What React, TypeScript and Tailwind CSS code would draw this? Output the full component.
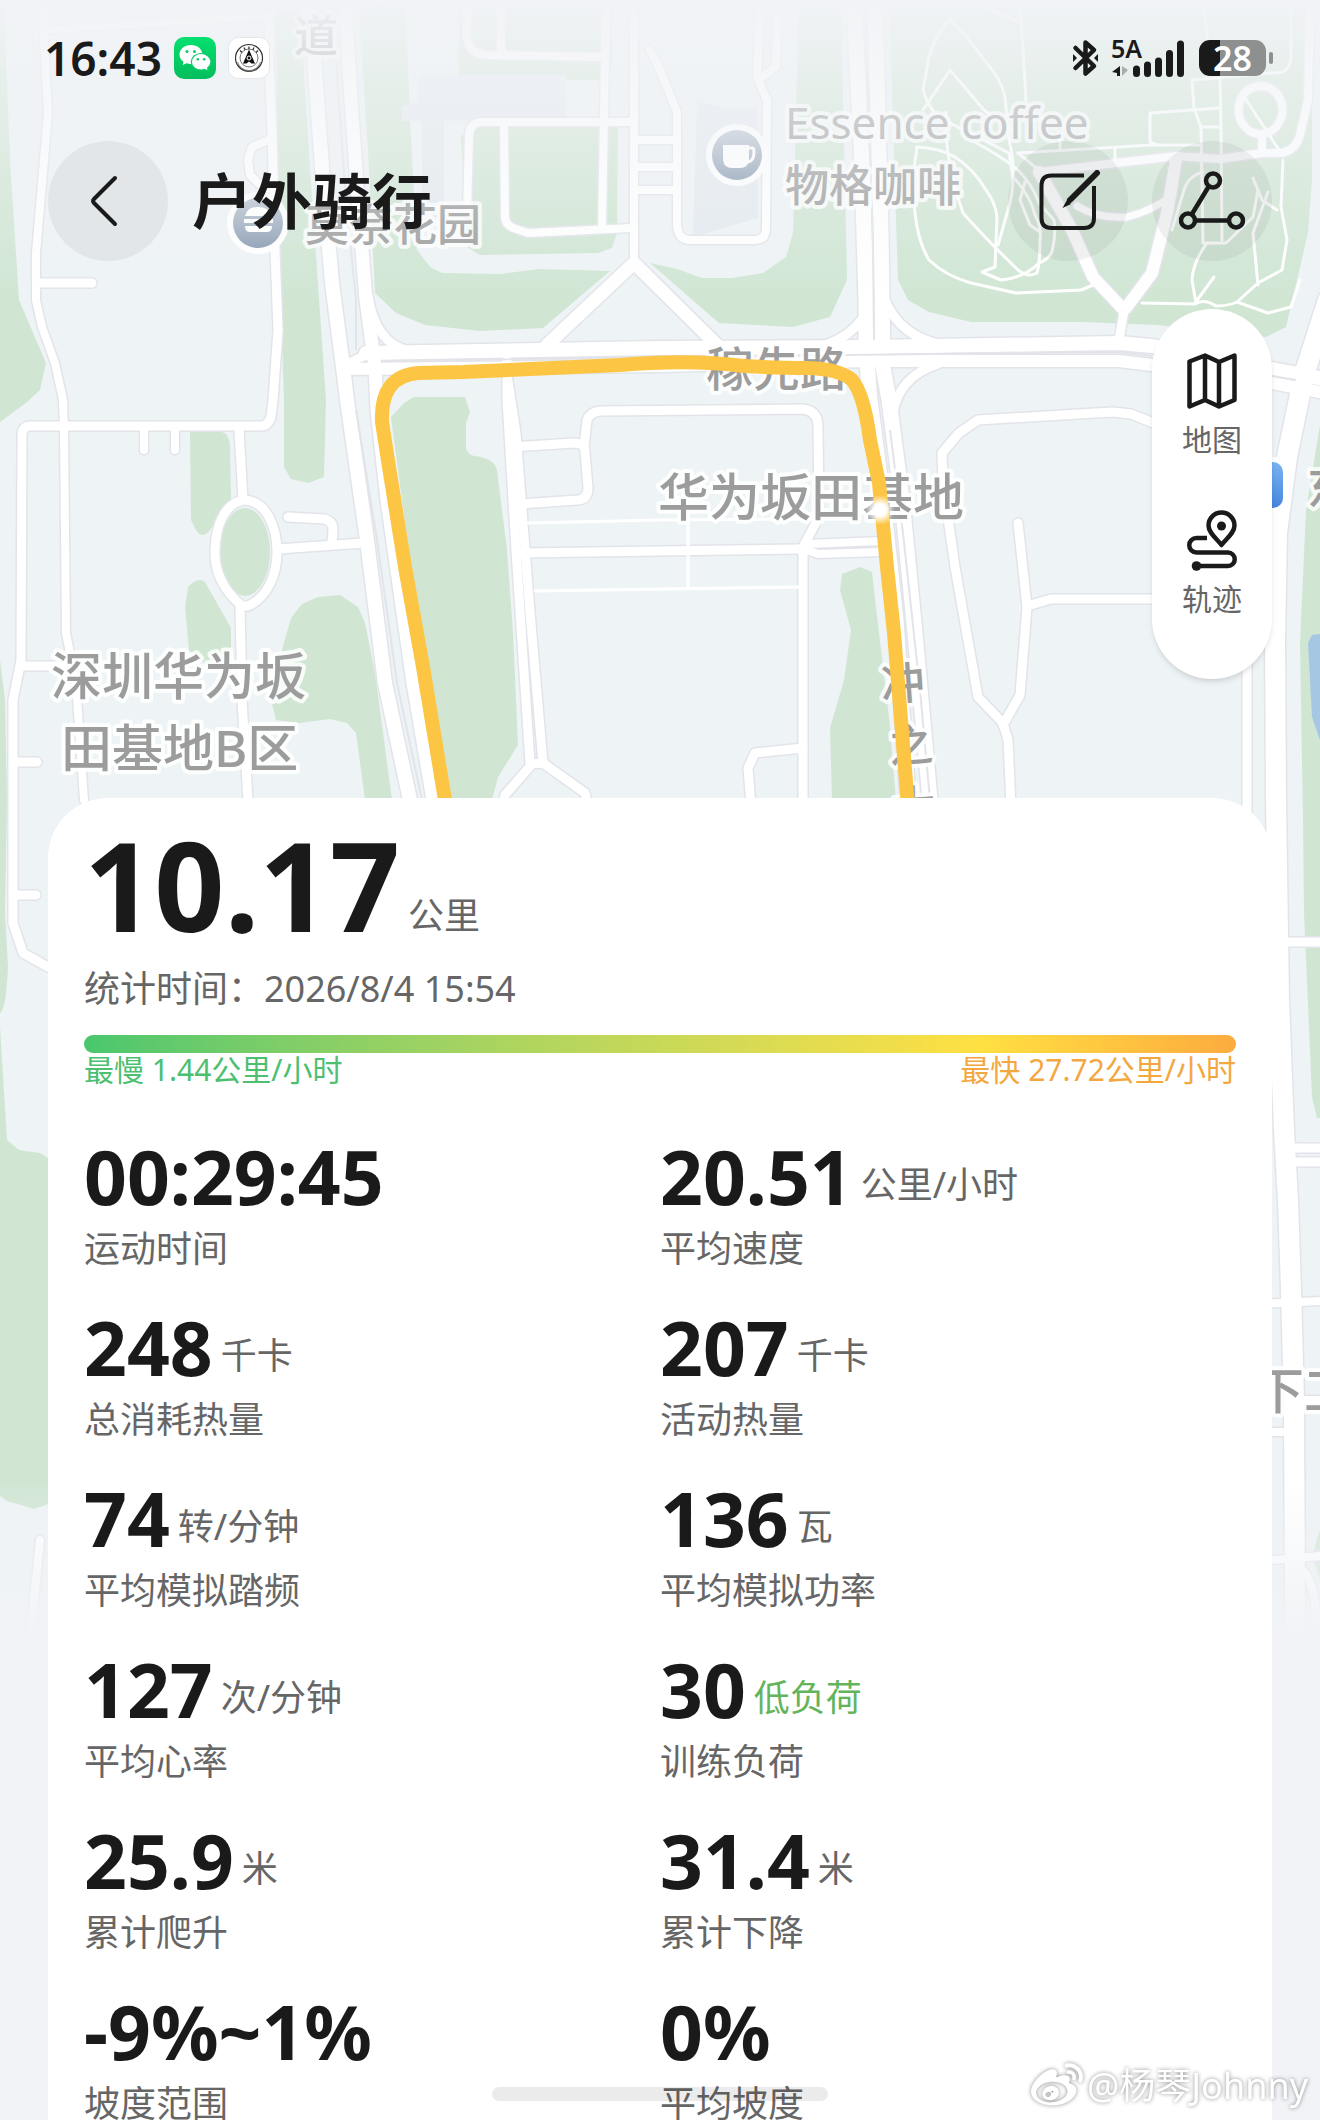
import React from "react";
import { FaWeibo } from "react-icons/fa";

type Road = { d: string; w: number };

const roads: Road[] = [
  // west blocks
  { w: 8, d: "M42 0L48 113L36 253L36 300L42 327L55 363L63 400L64 430L66 633L76 683L84 800" },
  { w: 9, d: "M38 283H92" },
  { w: 7, d: "M45 30L270 16" },
  { w: 9, d: "M270 20L269 60L272 130L275 250L278 330L273 400L271 417Q268 426 261 426H30Q22 426 22 436L21 660L13 700V923L23 953L48 967" },
  { w: 8, d: "M268 140L252 147L248 160L250 175L268 192" },
  { w: 8, d: "M144 430V450M175 430V450" },
  { w: 9, d: "M239 430L243 500" },
  { w: 9, d: "M243 500C268 500 277 530 277 552S268 597 248 606H242C230 596 214 578 215 550S226 504 243 500" },
  { w: 9, d: "M240 607L242 700L248 800" },
  { w: 9, d: "M278 549L364 543" },
  { w: 9, d: "M288 517L324 519Q333 521 333 530L332 543" },
  { w: 9, d: "M22 666H66M13 762H37M13 895H36" },
  { w: 8, d: "M40 1540L30 1640" },
  // western avenue
  { w: 14, d: "M306 0L314 57L322 167L332 283L343 367L347 400L366 533L385 683L410 800" },
  { w: 13, d: "M345 0L351 100L358 200L366 300L375 367L377 410L387 500L413 683L433 800" },
  { w: 9, d: "M368 296Q376 345 410 351" },
  { w: 9, d: "M343 366L372 352" },
  // cross street
  { w: 14, d: "M366 353L660 348L870 347L1119 343L1152 346L1272 369L1320 378" },
  { w: 12, d: "M345 369L660 366L870 361L1119 361L1152 365L1272 383L1320 392" },
  { w: 13, d: "M547 345L634 263L719 347" },
  // northern grid
  { w: 8, d: "M634 0V263" },
  { w: 8, d: "M467 0V38Q470 55 488 55L602 57" },
  { w: 8, d: "M501 0V55" },
  { w: 8, d: "M606 0L602 228" },
  { w: 8, d: "M633 122H480Q469 124 469 136L467 213" },
  { w: 8, d: "M504 125L505 218Q506 226 516 229L528 233L631 228" },
  { w: 8, d: "M634 140H677M634 167H677M634 190H677" },
  { w: 8, d: "M650 50Q657 62 662 75L677 112V225Q678 240 690 240H755Q766 240 766 228L767 100L757 77L760 10" },
  { w: 8, d: "M778 0L776 66L759 80" },
  // central avenue
  { w: 15, d: "M854 0L862 167L866 300L866 350L870 400L883 500L896 620L908 800" },
  { w: 15, d: "M875 0L881 233L883 367L889 400L902 500L915 633L930 800" },
  { w: 9, d: "M863 318Q850 336 828 344" },
  { w: 9, d: "M884 298Q900 338 944 345" },
  { w: 9, d: "M938 364Q900 376 893 412" },
  // park roads
  { w: 9, d: "M1125 305L1119 340" },
  { w: 12, d: "M1122 308L1093 277L1072 230L1039 172" },
  { w: 12, d: "M1126 308L1152 273L1167 213L1176 160" },
  { w: 7, d: "M1077 206Q1098 219 1127 217Q1150 212 1173 195" },
  { w: 8, d: "M1039 172L1176 156L1220 159L1262 153H1282Q1296 150 1300 135L1308 100L1310 0" },
  { w: 8, d: "M1261 86A22 24 0 1 1 1260 86ZM1262 134V153" },
  // inner block
  { w: 9, d: "M507 360V400L516 550L530 763" },
  { w: 9, d: "M507 375L516 433L529 600L543 763" },
  { w: 9, d: "M530 764L543 763L585 793L588 806M532 764L505 795L502 806" },
  { w: 9, d: "M511 447L574 443Q585 443 585 452L588 488Q588 499 578 500L520 504" },
  { w: 9, d: "M584 447L587 420Q590 412 600 411L803 409Q818 411 818 426L819 517L803 547V806" },
  { w: 9, d: "M520 553L803 549" },
  { w: 8, d: "M807 544L881 541M807 550L818 554L881 552" },
  { w: 9, d: "M803 748L755 753L748 768L751 806" },
  // eastern blocks
  { w: 9, d: "M1156 424L1131 414L1112 412L978 420L959 433L942 453L943 483L955 567L978 697L1003 723L1008 740L1011 806" },
  { w: 9, d: "M1018 523L1027 607L1020 695L1003 725" },
  { w: 9, d: "M1027 606L1051 599H1160" },
  { w: 9, d: "M1247 660V830" },
  { w: 20, d: "M1328 300L1304 375L1287 457L1277 533L1275 640L1276 798L1279 1000L1284 1130L1288 1200L1291 1290L1294 1400L1295 1624" },
  { w: 9, d: "M1284 942H1320M1284 1148H1320M1284 1162H1320" },
  { w: 8, d: "M1262 1304L1320 1301M1262 1432H1292M1296 1400H1320M1262 1561L1320 1556" },
  { w: 8, d: "M1300 1568Q1316 1580 1316 1622" },
];

const paths: string[] = [
  "M528 523L660 520L819 519",
  "M535 591L800 587",
  "M688 520V588",
  "M1018 153L1152 145L1200 145",
  "M1157 145L1150 142V113L1220 108",
  "M1192 80L1194 108L1201 127L1203 243H1226L1253 217L1258 190",
  "M1220 77L1221 127L1222 240M1201 127H1220",
  "M1192 80L1283 72Q1291 68 1291 55V0",
  "M1206 78L1207 34L1204 10",
  "M1245 98L1281 153",
  "M950 18Q934 38 929 57L923 90Q928 108 940 118L1009 153L1013 177Q1030 195 1035 215Q1042 228 1040 240Q1040 262 1037 273Q1028 278 1018 270Q985 238 963 213Q948 172 946 133V112",
  "M917 147Q911 180 915 213Q918 242 929 260Q946 276 971 283L1016 293L1081 290L1093 285",
  "M917 147Q940 148 955 157Q974 170 984 187Q996 203 997 217L995 267L982 272L1001 280Q1024 278 1039 263Q1052 258 1053 247Q1056 232 1054 220L1039 203Q1032 184 1018 170Q998 154 976 143",
  "M950 20Q968 36 984 60Q1001 78 1005 97L1009 140Q1014 160 1013 175Q1013 195 1008 210L998 245",
  "M923 110L950 70L984 110L1012 130",
  "M1020 0L1026 100M990 10L1020 22",
  "M1018 153L1045 175M1060 150V140M1115 148V160",
  "M1203 172Q1188 176 1184 190L1172 230",
  "M1207 243Q1193 262 1192 280L1196 303",
  "M1142 303L1195 304Q1204 298 1216 306Q1228 306 1237 302L1258 283L1282 270L1287 240L1281 207L1283 160",
  "M1237 302L1268 313L1291 307L1300 280",
  "M1253 178L1262 200L1277 210",
  "M1268 192L1253 233L1258 285",
  "M1195 303L1214 277",
  "M1025 182L1020 200L1030 225L1040 232",
];

const greens: string[] = [
  "M0 0H4L10 160L19 300L46 363L40 390L27 402L0 422Z",
  "M276 10H300L311 183L326 400L324 477L308 483L291 479L284 467V400L279 250Z",
  "M358 0L406 10L410 120L417 250L430 267L442 273L501 274L539 269L610 271L543 328L480 331L425 325L396 313L375 293L368 150Z",
  "M459 0H612V66L598 80H566L459 75Z",
  "M461 136L478 125H618L617 233L612 248L598 253L480 255L467 247Z",
  "M799 0H841L847 280L830 317L793 327L719 323L650 263L677 269L702 278H732L763 273L786 257L793 233Z",
  "M889 0H1312V180L1308 233L1286 327L1266 337L1157 325L1081 322H971L929 312L908 300L898 280Z",
  "M190 432H222Q229 434 230 445L231 500L210 530Q202 540 196 530L191 520Z",
  "M220 552A25 44 0 1 0 270 552A25 44 0 1 0 220 552Z",
  "M185 607L188 587Q198 576 205 582L231 628V650L206 665L189 650Z",
  "M318 597L340 595L358 607L365 623L375 673L392 800H365L356 733L347 723L330 719L299 723L276 720L271 700L282 650L291 618L302 604Z",
  "M391 417L404 403L414 397H465L470 412L466 423V448Q468 455 475 456Q494 458 497 470L507 550L513 633L518 745L498 777L492 800H447L424 667Z",
  "M842 574L860 567L872 572L879 633L889 717L896 800H832L830 728L844 680L851 630L840 590Z",
  "M1320 425L1306 510L1300 643L1303 820L1304 913L1312 1097L1317 1118H1320Z",
  "M0 660L5 700L7 800L5 913L8 967Q6 1010 0 1013Z",
  "M0 1027L7 1140L19 1150L40 1153L60 1165V1500L34 1509L7 1501L0 1496Z",
  "M1320 1530L1312 1555L1320 1580Z",
];

const routeLine =
  "M446 806L423 667L405 567L389 467L382 422Q380 376 418 373L463 372L620 365Q690 359 744 366Q780 368 807 368Q840 369 852 380Q864 394 870 440L879 483L887 567L894 633L908 806";

function MapLabel(props: {
  x: number;
  y: number;
  size: number;
  color?: string;
  weight?: number;
  rotate?: number;
  children: string;
}) {
  const { x, y, size, color = "#9c9c9c", weight = 500, rotate, children } = props;
  return (
    <text
      x={x}
      y={y}
      fontSize={size}
      fill={color}
      stroke="#ffffff"
      strokeOpacity={0.85}
      strokeWidth={8}
      strokeLinejoin="round"
      paintOrder="stroke"
      fontWeight={weight}
      transform={rotate ? `rotate(${rotate} ${x} ${y})` : undefined}
    >
      {children}
    </text>
  );
}

function MapBackground() {
  return (
    <svg aria-hidden="true" viewBox="0 0 1320 1640" className="absolute inset-x-0 top-0 h-auto w-full">
      <defs>
        <linearGradient id="topFade" x1="0" y1="0" x2="0" y2="1">
          <stop offset="0" stopColor="#f1f3f6" stopOpacity="1" />
          <stop offset="0.25" stopColor="#f1f3f6" stopOpacity="0.7" />
          <stop offset="0.65" stopColor="#f1f3f6" stopOpacity="0.3" />
          <stop offset="1" stopColor="#f1f3f6" stopOpacity="0" />
        </linearGradient>
        <linearGradient id="bottomFade" x1="0" y1="0" x2="0" y2="1">
          <stop offset="0" stopColor="#f1f3f6" stopOpacity="0" />
          <stop offset="0.85" stopColor="#f1f3f6" stopOpacity="0.9" />
          <stop offset="1" stopColor="#f1f3f6" stopOpacity="1" />
        </linearGradient>
        <linearGradient id="poi" x1="0" y1="0" x2="0" y2="1">
          <stop offset="0" stopColor="#b9c3d0" />
          <stop offset="1" stopColor="#8799b0" />
        </linearGradient>
        <linearGradient id="metro" x1="0" y1="0" x2="0" y2="1">
          <stop offset="0" stopColor="#79b4f2" />
          <stop offset="1" stopColor="#4486dd" />
        </linearGradient>
        <radialGradient id="glow">
          <stop offset="0.4" stopColor="#ffffff" />
          <stop offset="1" stopColor="#ffffff" stopOpacity="0" />
        </radialGradient>
      </defs>
      <rect width="1320" height="1640" fill="#eef3f6" />
      {greens.map((d) => (
        <path key={d} d={d} fill="#d0e6d3" />
      ))}
      <path d="M418 75H566V118L444 121V220H422V121H402V106L418 102Z" fill="#e4eaf0" />
      <path d="M697 100L726 109L758 107V218L693 237Z" fill="#e4eaf0" />
      <path d="M1320 634L1312 635L1308 643L1312 717L1320 740Z" fill="#a5c7e4" />
      <g fill="none" stroke="#e2e4ea" strokeLinecap="round" strokeLinejoin="round">
        {roads.map((r) => (
          <path key={r.d} d={r.d} strokeWidth={r.w + 3} />
        ))}
      </g>
      <g fill="none" stroke="#ffffff" strokeLinecap="round" strokeLinejoin="round">
        {roads.map((r) => (
          <path key={r.d} d={r.d} strokeWidth={r.w} />
        ))}
        {paths.map((d) => (
          <path key={d} d={d} strokeWidth={3} />
        ))}
      </g>
      <g stroke="#e2e4ea" strokeWidth="2" fill="none">
        <path d="M336 60L346 200L356 300L356 350M356 410L376 533L397 683L422 800" />
        <path d="M866 20L873 240L874 340M890 430L903 533L920 690L930 800" />
        <path d="M390 361L660 357L1119 352L1152 356M1272 376L1296 380" />
      </g>

      <g fontFamily='"Noto Sans", "Noto Sans CJK SC", sans-serif'>
        <MapLabel x={294} y={52} size={44} color="#8c8c8c">道</MapLabel>
        <MapLabel x={305} y={241} size={44}>莫奈花园</MapLabel>
        <MapLabel x={785} y={139} size={44} color="#9d9d9d" weight={400}>Essence coffee</MapLabel>
        <MapLabel x={785} y={202} size={44}>物格咖啡</MapLabel>
        <MapLabel x={706} y={386} size={47}>稼先路</MapLabel>
        <MapLabel x={658} y={516} size={51}>华为坂田基地</MapLabel>
        <MapLabel x={51} y={695} size={51}>深圳华为坂</MapLabel>
        <MapLabel x={61} y={767} size={51}>田基地B区</MapLabel>
        <MapLabel x={882} y={701} size={44} rotate={-4}>冲</MapLabel>
        <MapLabel x={890} y={763} size={44} rotate={-4}>之</MapLabel>
        <MapLabel x={893} y={824} size={44} rotate={-4}>大</MapLabel>
        <MapLabel x={1307} y={504} size={46}>东</MapLabel>
        <MapLabel x={1254} y={1409} size={50}>下工</MapLabel>
      </g>

      <circle cx="258" cy="223" r="31" fill="#ffffff" />
      <circle cx="258" cy="223" r="25" fill="url(#poi)" />
      <path d="M245 216Q247 207 258 207T272 216ZM244 219H273V223H244ZM245 226H272Q272 232 267 232H250Q245 232 245 226Z" fill="#ffffff" />
      <circle cx="737" cy="155" r="31" fill="#ffffff" />
      <circle cx="737" cy="155" r="25" fill="url(#poi)" />
      <path d="M723 145H749V160Q748 168 740 168H732Q724 168 723 160Z" fill="#ffffff" />
      <path d="M749 148H752Q754 148 754 152Q754 161 748 162" fill="none" stroke="#ffffff" strokeWidth="3" />
      <rect x="1234" y="457" width="55" height="56" rx="14" fill="#ffffff" />
      <rect x="1240" y="462" width="43" height="46" rx="10" fill="url(#metro)" />

      <rect width="1320" height="300" fill="url(#topFade)" />
      <rect y="1480" width="1320" height="160" fill="url(#bottomFade)" />
      <path d={routeLine} fill="none" stroke="#fdc544" strokeWidth="14" strokeLinejoin="round" />
      <circle cx="880" cy="510" r="15" fill="url(#glow)" />
    </svg>
  );
}

function WeChatIcon() {
  return (
    <svg viewBox="0 0 42 42" className="size-[42px]" role="img" aria-label="微信">
      <defs>
        <linearGradient id="wx" x1="0" y1="0" x2="0" y2="1">
          <stop offset="0" stopColor="#06e070" />
          <stop offset="1" stopColor="#05bd5c" />
        </linearGradient>
      </defs>
      <rect width="42" height="42" rx="10" fill="url(#wx)" />
      <path d="M17 8C10.500 8 5.500 12.200 5.500 17.500C5.500 20.500 7 23 9.500 24.700L8.700 28L12.500 26.200Q14.500 26.900 17 26.900C23.500 26.900 28.300 22.800 28.300 17.500S23.500 8 17 8Z" fill="#fff" />
      <path d="M27 16.500C21.600 16.500 17.300 20.200 17.300 24.800S21.600 33 27 33Q29 33 30.800 32.400L34.400 34.200L33.600 31C35.700 29.500 37 27.300 37 24.800C37 20.200 32.400 16.500 27 16.500Z" fill="#fff" stroke="#06cd65" strokeWidth="1.200" />
      <g fill="#06cd65">
        <circle cx="13" cy="14.500" r="1.500" />
        <circle cx="20.500" cy="14.500" r="1.500" />
        <circle cx="23.800" cy="22.300" r="1.300" />
        <circle cx="30.200" cy="22.300" r="1.300" />
      </g>
    </svg>
  );
}

function BadgeAppIcon() {
  return (
    <svg viewBox="0 0 42 42" className="size-[42px]" aria-hidden="true">
      <rect x="0.500" y="0.500" width="41" height="41" rx="10" fill="#fff" stroke="#e4e6e9" />
      <circle cx="21" cy="21" r="13.500" fill="none" stroke="#333" strokeWidth="1.200" />
      <circle cx="21" cy="21" r="9" fill="none" stroke="#555" strokeWidth="0.800" />
      <path d="M9.500 25A12 12 0 0 0 32.500 25M10.500 28A12 12 0 0 0 31.500 28" fill="none" stroke="#666" strokeWidth="0.800" />
      <path d="M12 13.500L14 15.500M16 10.500L17.200 13M21 9.500V12.200M26 10.500L24.800 13M30 13.500L28 15.500" stroke="#333" strokeWidth="1.300" />
      <path d="M21 12.500L15 26.500H18.500L21 24.500L23.500 26.500H27Z" fill="#111" />
      <circle cx="21" cy="21" r="2" fill="none" stroke="#fff" />
    </svg>
  );
}

function StatusIcons() {
  return (
    <div className="flex items-center">
      <svg viewBox="0 0 27 38" className="mr-3 h-[38px] w-[27px]" role="img" aria-label="蓝牙">
        <path d="M3.500 9L22 27L13.500 34.500V3.500L22 11L3.500 29" fill="none" stroke="#1a1a1a" strokeWidth="4.500" strokeLinejoin="round" strokeLinecap="round" />
        <path d="M1 15L5 19L1 23ZM26 15L22 19L26 23Z" fill="#1a1a1a" />
      </svg>
      <div className="relative h-[38px] w-[76px]">
        <span className="absolute left-0 top-0 text-[25px] font-semibold leading-[18px]">5A</span>
        <svg viewBox="0 0 76 38" className="h-[38px] w-[76px]" role="img" aria-label="信号">
          <path d="M9 27V37H6V34L1 33Z" fill="#1a1a1a" />
          <path d="M11 27V37L17 31Z" fill="#a8adab" />
          <path d="M25.500 30V34.500M36.500 26V34.500M47.500 22V34.500M58.500 14.500V34.500M69.500 5V34.500" stroke="#1a1a1a" strokeWidth="7" strokeLinecap="round" />
        </svg>
      </div>
      <div className="ml-3 flex h-9 w-[67px] items-center justify-center rounded-[11px] bg-linear-to-r from-[#1a1a1a] from-32% to-[#8d908f] to-32% text-[34px] font-semibold leading-9 text-white">
        28
      </div>
      <span className="ml-[3px] h-3 w-1 rounded-full bg-[#8d908f]" />
    </div>
  );
}

function BackIcon() {
  return (
    <svg viewBox="0 0 36 52" className="mr-2 h-[52px] w-9" aria-hidden="true">
      <path d="M29 3L8 24Q6 26 8 28L29 49" fill="none" stroke="#1a1a1a" strokeWidth="4" strokeLinecap="round" strokeLinejoin="round" />
    </svg>
  );
}

function EditIcon() {
  return (
    <svg viewBox="0 0 62 62" className="ml-1 size-[62px]" aria-hidden="true">
      <path d="M45 5.500H12.500Q2.500 5.500 2.500 15.500V48Q2.500 58 12.500 58H45Q55 58 55 48V16" fill="none" stroke="#1a1a1a" strokeWidth="4" />
      <path d="M58 3L31 30" stroke="#1a1a1a" strokeWidth="6" strokeLinecap="round" />
      <path d="M28 30L32 34L23.500 38Z" fill="#1a1a1a" />
    </svg>
  );
}

function NodesIcon() {
  return (
    <svg viewBox="0 0 66 60" className="h-[60px] w-[66px]" aria-hidden="true">
      <g fill="none" stroke="#1a1a1a" strokeWidth="4.500">
        <circle cx="34" cy="9.500" r="7" />
        <circle cx="9" cy="49.500" r="7" />
        <circle cx="57" cy="49.500" r="7" />
        <path d="M30 15L13 43M16 49.500H50" />
      </g>
    </svg>
  );
}

function MapIcon() {
  return (
    <svg viewBox="0 0 50 56" className="h-14 w-[50px]" aria-hidden="true">
      <path d="M2.500 8.500L18 2.500L32 9L47.500 2.500V47L32 53.500L18 47L2.500 53.500ZM18 2.500V47M32 9V53.500" fill="none" stroke="#1a1a1a" strokeWidth="4.500" strokeLinejoin="round" />
    </svg>
  );
}

function TrackIcon() {
  return (
    <svg viewBox="0 0 50 62" className="h-[62px] w-[50px]" aria-hidden="true">
      <g fill="none" stroke="#1a1a1a" strokeWidth="4.500" strokeLinejoin="round">
        <path d="M34.500 35C30 29 21.500 23 21.500 15.500A13 13 0 0 1 47.500 15.500C47.500 23 39 29 34.500 35Z" />
        <path d="M20 28H9.500A7 7 0 0 0 9.500 42.500H41A6.500 6.500 0 0 1 41 56H9" />
      </g>
      <circle cx="34.500" cy="16" r="4.500" fill="#1a1a1a" />
      <circle cx="9.500" cy="56" r="4.800" fill="#1a1a1a" />
    </svg>
  );
}

type Stat = { value: string; unit?: string; label: string; green?: boolean };

const stats: Stat[] = [
  { value: "00:29:45", label: "运动时间" },
  { value: "20.51", unit: "公里/小时", label: "平均速度" },
  { value: "248", unit: "千卡", label: "总消耗热量" },
  { value: "207", unit: "千卡", label: "活动热量" },
  { value: "74", unit: "转/分钟", label: "平均模拟踏频" },
  { value: "136", unit: "瓦", label: "平均模拟功率" },
  { value: "127", unit: "次/分钟", label: "平均心率" },
  { value: "30", unit: "低负荷", label: "训练负荷", green: true },
  { value: "25.9", unit: "米", label: "累计爬升" },
  { value: "31.4", unit: "米", label: "累计下降" },
  { value: "-9%~1%", label: "坡度范围" },
  { value: "0%", label: "平均坡度" },
];

function StatItem({ stat }: { stat: Stat }) {
  return (
    <div className="flex flex-col-reverse gap-1.5">
      <dt className="text-[36px] leading-[47px] text-[#666666]">{stat.label}</dt>
      <dd className="flex items-end gap-2">
        <span className="text-[75px] font-bold leading-[86px]">{stat.value}</span>
        {stat.unit && (
          <span className={stat.green ? "text-[36px] leading-[68px] text-[#64b45c]" : "text-[36px] leading-[68px] text-[#666666]"}>
            {stat.unit}
          </span>
        )}
      </dd>
    </div>
  );
}

export default function App() {
  return (
    <div className="relative h-screen overflow-hidden bg-[#f1f3f6] font-['Noto_Sans','Noto_Sans_CJK_SC',sans-serif] text-[#1a1a1a]">
      <MapBackground />

      <div className="relative flex flex-col">
        <div className="flex h-[116px] items-center justify-between pl-11 pr-[47px]">
          <div className="flex items-center gap-3">
            <span className="text-[46px] font-semibold leading-[48px]">16:43</span>
            <WeChatIcon />
            <BadgeAppIcon />
          </div>
          <StatusIcons />
        </div>

        <header className="mt-[25px] flex items-center gap-6 px-12">
          <button type="button" aria-label="返回" className="flex size-[120px] shrink-0 items-center justify-center rounded-full bg-black/5">
            <BackIcon />
          </button>
          <h1 className="grow text-[60px] font-bold leading-[80px]">户外骑行</h1>
          <button type="button" aria-label="编辑" className="flex size-[120px] shrink-0 items-center justify-center rounded-full bg-black/5">
            <EditIcon />
          </button>
          <button type="button" aria-label="分享轨迹" className="flex size-[120px] shrink-0 items-center justify-center rounded-full bg-black/5">
            <NodesIcon />
          </button>
        </header>

        <nav className="mr-12 mt-12 flex h-[370px] w-[120px] flex-col items-center gap-[50px] self-end rounded-full bg-white pt-11 text-[#666666] shadow-md">
          <button type="button" className="flex flex-col items-center gap-[11px] text-[30px] leading-[40px]">
            <MapIcon />
            地图
          </button>
          <button type="button" className="flex flex-col items-center gap-[7px] text-[30px] leading-[40px]">
            <TrackIcon />
            轨迹
          </button>
        </nav>

        <main className="mx-12 mt-[119px] rounded-t-[60px] bg-white px-9 pt-[27px]">
          <div className="flex items-end gap-2">
            <span className="text-[123px] font-bold leading-[120px]">10.17</span>
            <span className="text-[36px] leading-[58px] text-[#666666]">公里</span>
          </div>
          <p className="mt-5 text-[36px] leading-[48px] text-[#666666]">统计时间：2026/8/4 15:54</p>
          <div className="mt-[22px] h-[18px] rounded-[9px] bg-linear-to-r from-[#48c76e] via-[#ffe042] via-78% to-[#fcab3e]" />
          <div className="flex justify-between text-[30px] leading-[34px]">
            <span className="text-[#4dbf70]">最慢 1.44公里/小时</span>
            <span className="text-[#f3a83f]">最快 27.72公里/小时</span>
          </div>
          <dl className="mt-[46px] grid grid-cols-2 gap-y-8">
            {stats.map((s) => (
              <StatItem key={s.label} stat={s} />
            ))}
          </dl>
        </main>
      </div>

      <div className="absolute bottom-[19px] left-1/2 h-[14px] w-[336px] -translate-x-1/2 rounded-full bg-black/8" />
      <div className="absolute bottom-2 right-3 flex items-center gap-1 text-[36px] leading-[48px] text-white drop-shadow-[0_0_2px_rgba(0,0,0,0.45)]">
        <FaWeibo className="size-[52px]" aria-hidden="true" />
        <span>@杨琴Johnny</span>
      </div>
    </div>
  );
}
